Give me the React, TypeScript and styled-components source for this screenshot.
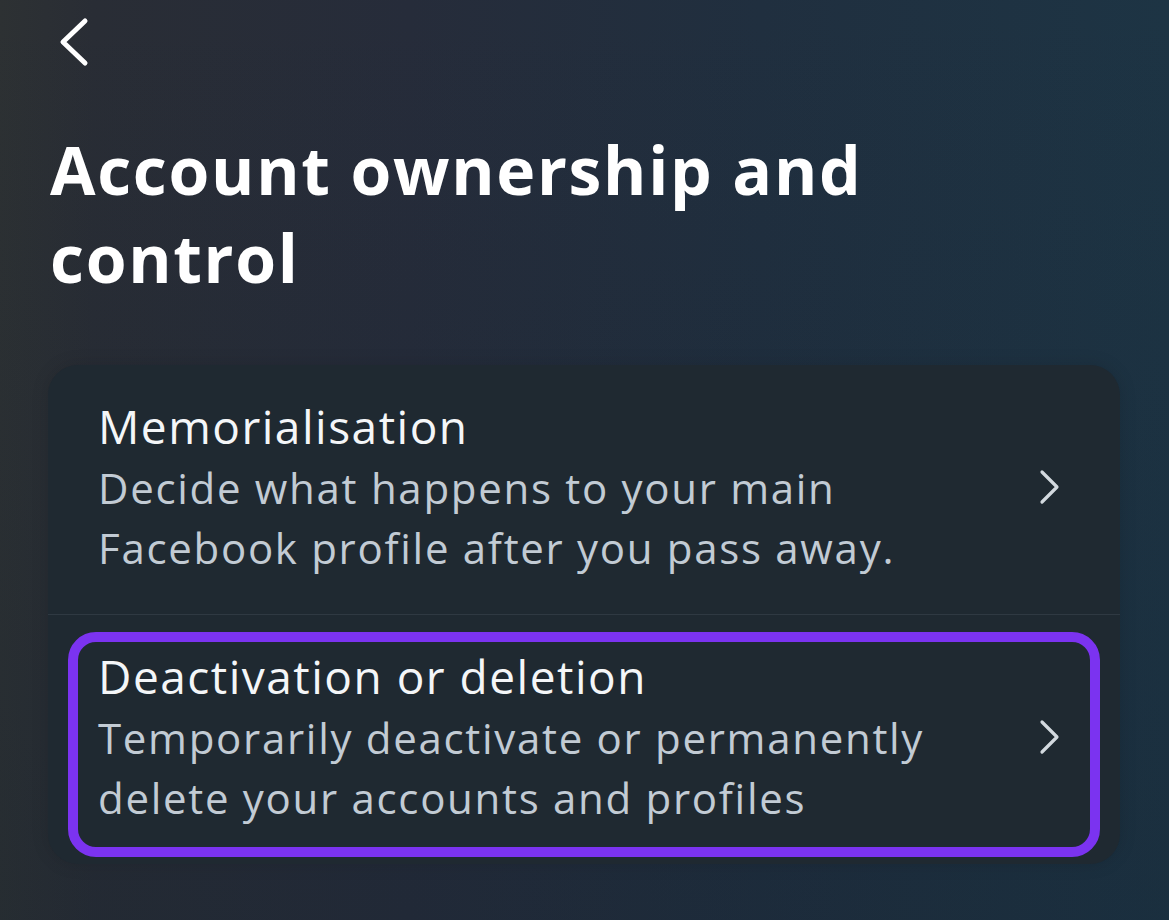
import React from 'react'
import styled, { createGlobalStyle } from 'styled-components'

interface Item {
  title: string;
  lines: string[];
  selected?: boolean;
}

const items: Item[] = [
  {
    title: 'Memorialisation',
    lines: ['Decide what happens to your main', 'Facebook profile after you pass away.'],
  },
  {
    title: 'Deactivation or deletion',
    lines: ['Temporarily deactivate or permanently', 'delete your accounts and profiles'],
    selected: true,
  },
]

const App: React.FC = () => {
  return (
    <Page>
      <GlobalStyle />
      <BackButton aria-label="Back">
        <svg width="36" height="52" viewBox="0 0 36 52" fill="none">
          <path d="M29 5 L7 26 L29 47" stroke="#ffffff" strokeWidth="5" strokeLinecap="round" strokeLinejoin="round" />
        </svg>
      </BackButton>
      <Heading>Account ownership and control</Heading>
      <Card>
        {items.map((item, i) => (
          <Row key={item.title} divided={i > 0}>
            <Item selected={!!item.selected}>
              <Texts>
                <ItemTitle>{item.title}</ItemTitle>
                {item.lines.map((l) => (
                  <ItemSub key={l}>{l}</ItemSub>
                ))}
              </Texts>
              <Chevron width="24" height="36" viewBox="0 0 24 36" fill="none">
                <path d="M4 3 L19 18 L4 33" stroke="#d3d9df" strokeWidth="3.2" strokeLinecap="round" strokeLinejoin="round" />
              </Chevron>
            </Item>
          </Row>
        ))}
      </Card>
    </Page>
  )
}

export default App

const GlobalStyle = createGlobalStyle`
  html, body {
    margin: 0;
    padding: 0;
    background: #262c36;
  }
  body {
    font-family: "Open Sans", "Liberation Sans", sans-serif;
  }
`

const Page = styled.div`
  width: 1169px;
  height: 920px;
  box-sizing: border-box;
  overflow: hidden;
  padding: 14px 49px 0 48px;
  display: flex;
  flex-direction: column;
  background:
    linear-gradient(180deg, rgba(0,0,0,0) 0%, rgba(18,32,46,0.25) 100%),
    linear-gradient(90deg, #2d3133 0%, #292d35 8%, #262c3a 35%, #202f3f 65%, #1d3444 100%);
`

const BackButton = styled.button`
  display: flex;
  align-items: center;
  justify-content: flex-start;
  background: none;
  border: 0;
  padding: 0;
  margin-left: 8px;
  width: 52px;
  height: 56px;
  cursor: pointer;
`

const Heading = styled.h1`
  margin: 55px 0 0 2px;
  width: 880px;
  font-size: 66px;
  line-height: 88px;
  font-weight: 700;
  color: #ffffff;
  letter-spacing: 1.7px;
`

const Card = styled.div`
  margin-top: 64px;
  background: #1f2931;
  border-radius: 30px;
  box-shadow: 0 0 18px rgba(0, 0, 0, 0.12);
`

const Row = styled.div<{ divided: boolean }>`
  padding: 17px 20px 7px 20px;
  border-top: ${(p) => (p.divided ? '1.5px solid #2f3942' : 'none')};
`

const Item = styled.div<{ selected: boolean }>`
  display: flex;
  align-items: center;
  justify-content: space-between;
  border: 10px solid ${(p) => (p.selected ? '#7b33f0' : 'transparent')};
  border-radius: 28px;
  padding: 3px 30px 19px 20px;
`

const Texts = styled.div`
  display: flex;
  flex-direction: column;
`

const ItemTitle = styled.div`
  font-size: 46px;
  line-height: 63px;
  font-weight: 500;
  letter-spacing: 1.5px;
  color: #f4f6f8;
`

const ItemSub = styled.div`
  font-size: 42px;
  line-height: 60px;
  letter-spacing: 1.7px;
  color: #c2cbd4;
`

const Chevron = styled.svg`
  flex: none;
  margin-right: -2px;
`
